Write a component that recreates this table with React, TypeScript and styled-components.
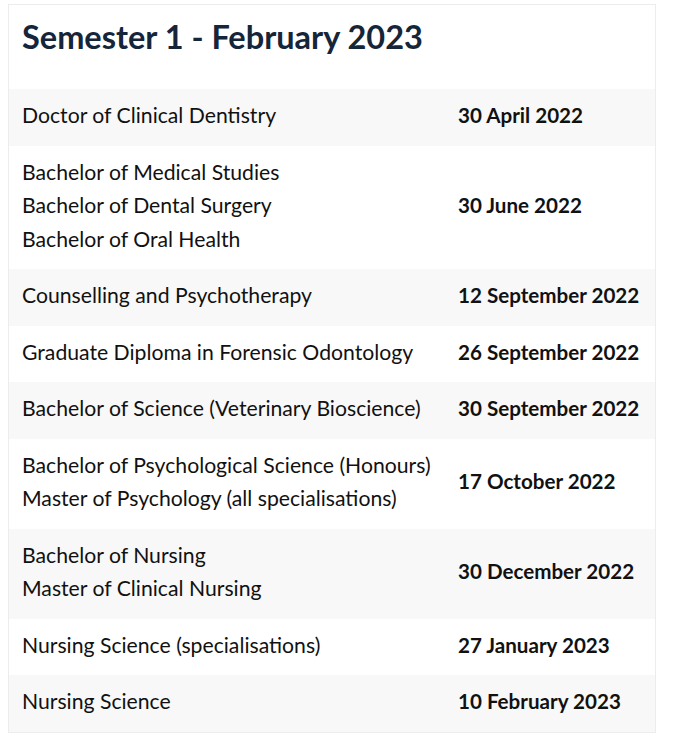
import React from "react";
import styled, { createGlobalStyle } from "styled-components";

const Global = createGlobalStyle`
  html, body { margin: 0; padding: 0; background: #ffffff; }
  body { font-family: Lato, "Noto Sans", sans-serif; color: #111111; }
`;

const Card = styled.section`
  margin: 4px 0 0 8px;
  width: 648px;
  box-sizing: border-box;
  border: 1px solid #ececec;
  background: #ffffff;
`;

const Title = styled.h2`
  margin: 0;
  height: 84px;
  box-sizing: border-box;
  padding: 12px 13px 0;
  font-size: 32.5px;
  line-height: 40px;
  font-weight: 700;
  color: #15253a;
`;

const Row = styled.div<{ $shade: boolean }>`
  display: grid;
  grid-template-columns: 436px 1fr;
  align-items: center;
  background: ${(p) => (p.$shade ? "#f8f8f8" : "#ffffff")};
`;

const Programs = styled.div`
  padding: 10px 13px 13px;
  font-size: 21.2px;
  line-height: 33.5px;
  color: #111111;
`;

const Line = styled.div`
  white-space: nowrap;
`;

const DateCell = styled.div`
  padding: 10px 13px 13px;
  font-size: 20.6px;
  line-height: 33.5px;
  font-weight: 700;
  color: #111111;
  white-space: nowrap;
`;

const rows: { programs: string[]; date: string }[] = [
  { programs: ["Doctor of Clinical Dentistry"], date: "30 April 2022" },
  {
    programs: ["Bachelor of Medical Studies", "Bachelor of Dental Surgery", "Bachelor of Oral Health"],
    date: "30 June 2022",
  },
  { programs: ["Counselling and Psychotherapy"], date: "12 September 2022" },
  { programs: ["Graduate Diploma in Forensic Odontology"], date: "26 September 2022" },
  { programs: ["Bachelor of Science (Veterinary Bioscience)"], date: "30 September 2022" },
  {
    programs: ["Bachelor of Psychological Science (Honours)", "Master of Psychology (all specialisations)"],
    date: "17 October 2022",
  },
  { programs: ["Bachelor of Nursing", "Master of Clinical Nursing"], date: "30 December 2022" },
  { programs: ["Nursing Science (specialisations)"], date: "27 January 2023" },
  { programs: ["Nursing Science"], date: "10 February 2023" },
];

export default function App() {
  return (
    <>
      <Global />
      <Card>
        <Title>Semester 1 - February 2023</Title>
        {rows.map((r, i) => (
          <Row key={i} $shade={i % 2 === 0}>
            <Programs>
              {r.programs.map((p) => (
                <Line key={p}>{p}</Line>
              ))}
            </Programs>
            <DateCell>{r.date}</DateCell>
          </Row>
        ))}
      </Card>
    </>
  );
}
